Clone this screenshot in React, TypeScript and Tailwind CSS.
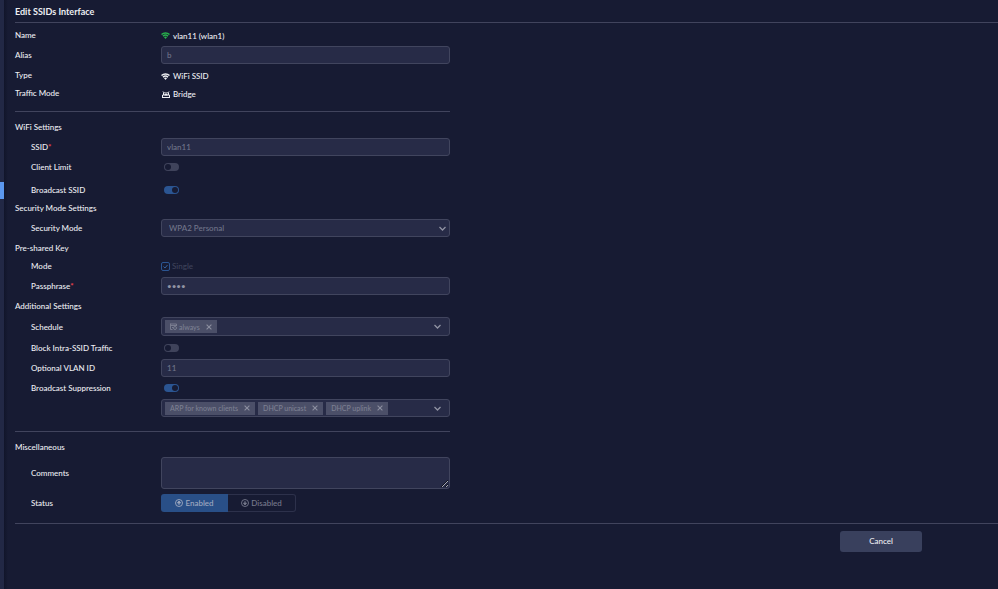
import type { ReactNode } from 'react';
import clsx from 'clsx';

const field =
  'block w-full rounded-[3px] border border-[#41455e] bg-[#272b47] text-[8px] leading-3 font-medium text-[#71758a] outline-none';

function Row({
  label,
  htmlFor,
  required,
  indent = true,
  className,
  children,
}: {
  label?: string;
  htmlFor?: string;
  required?: boolean;
  indent?: boolean;
  className: string;
  children: ReactNode;
}) {
  return (
    <div className={clsx('flex items-center', className)}>
      <div className={clsx('w-[146px] shrink-0', indent && 'pl-4')}>
        {label && (
          <label htmlFor={htmlFor}>
            {label}
            {required && <span className="font-bold text-[#f0444f]">*</span>}
          </label>
        )}
      </div>
      <div className="min-w-0 flex-1">{children}</div>
    </div>
  );
}

function Wifi({ className }: { className?: string }) {
  return (
    <svg viewBox="0 0 18 14" className={clsx('h-[7px] w-[9px]', className)} fill="none" stroke="currentColor" strokeWidth="3">
      <path d="M1 5C5.500.9 12.500.9 17 5" />
      <path d="M4 8.300c3-2.600 7-2.600 10 0" />
      <path d="M5.800 10c1.900-1.500 4.500-1.500 6.400 0L9 14z" fill="currentColor" stroke="none" />
    </svg>
  );
}

function Bridge() {
  return (
    <svg viewBox="0 0 16 14" className="h-[7px] w-2" fill="none" stroke="currentColor" strokeWidth="2">
      <path d="M1 14V8h14v6M1 13h14" />
      <path d="M3 8V3M13 8V3M2 1l3 3h6l3-3" />
      <path d="M5 6h6v3H5z" fill="currentColor" stroke="none" />
    </svg>
  );
}

function Chevron() {
  return (
    <svg viewBox="0 0 14 10" className="h-[5px] w-[7px] shrink-0" fill="none" stroke="#9093a3" strokeWidth="2.6">
      <path d="M1 2l6 6 6-6" />
    </svg>
  );
}

function Cross() {
  return (
    <svg viewBox="0 0 10 10" className="size-[6px]" fill="none" stroke="#8c8fa0" strokeWidth="1.800">
      <path d="M1 1l8 8M9 1L1 9" />
    </svg>
  );
}

function CalendarIcon() {
  return (
    <svg viewBox="0 0 14 14" className="size-[7px]" fill="none" stroke="currentColor" strokeWidth="1.800">
      <path d="M1 2h12v4M1 5h12M1 1v12h4M4 9h2" />
      <circle cx="10" cy="10" r="3" />
    </svg>
  );
}

function StatusIcon({ down }: { down?: boolean }) {
  return (
    <svg viewBox="0 0 16 16" className="size-2" fill="none" stroke="currentColor" strokeWidth="1.800">
      <circle cx="8" cy="8" r="7" />
      {down ? (
        <path d="M8 4v6M5 8h6l-3 4z" fill="currentColor" />
      ) : (
        <path d="M8 12V6M5 8h6L8 4z" fill="currentColor" />
      )}
    </svg>
  );
}

function Toggle({ id, on }: { id: string; on?: boolean }) {
  return (
    <span className="ml-[3px] flex">
      <input id={id} type="checkbox" role="switch" defaultChecked={on} disabled className="peer sr-only" />
      <span
        className={clsx(
          'flex h-2 w-[15px] items-center rounded-full px-px',
          on ? 'justify-end bg-[#2b5592]' : 'justify-start bg-[#3f435b]',
        )}
      >
        <span className="size-[6px] rounded-full bg-[#171b33]" />
      </span>
    </span>
  );
}

function Tag({ text, icon }: { text: string; icon?: ReactNode }) {
  return (
    <span className="flex h-[13px] items-center bg-[#4b4f68] pr-[5px] pl-[5px] text-[7px] leading-3 text-[#7d8093]">
      {icon && <span className="mr-0.5">{icon}</span>}
      {text}
      <button type="button" disabled aria-label={`Remove ${text}`} className="ml-1.5">
        <Cross />
      </button>
    </span>
  );
}

function TagBox({ label, className, children }: { label: string; className: string; children: ReactNode }) {
  return (
    <div role="group" aria-label={label} className={clsx(field, className, 'flex! items-center gap-[3px] pr-2 pl-[3px]')}>
      {children}
      <span className="ml-auto">
        <Chevron />
      </span>
    </div>
  );
}

const divider = 'border-t border-[#41445d]';

export default function App() {
  return (
    <div className="flex min-h-screen bg-[#171b33] font-['Lato',sans-serif] text-[8px] leading-3 font-medium text-[#eeeff3]">
      <aside className="w-1 shrink-0 bg-[#222845] pt-[182px]">
        <div className="h-[17px] bg-[#5b97ee]" />
      </aside>
      <div className="w-1 shrink-0 bg-linear-to-r from-[#11152a] to-[#171b33]" />
      <main className="min-w-0 flex-1 pl-[7px]">
        <h1 className="flex h-[23px] items-center border-b border-[#41445d] pt-px text-[9px] font-bold">
          Edit SSIDs Interface
        </h1>

        <form>
          <div className="w-full max-w-[435px]">
            <Row label="Name" indent={false} className="h-[23px]">
              <span className="flex items-center gap-[3px] pt-0.5">
                <Wifi className="text-[#28b14c]" />
                vlan11 (wlan1)
              </span>
            </Row>
            <Row label="Alias" htmlFor="alias" indent={false} className="h-[18px]">
              <input id="alias" disabled defaultValue="b" className={clsx(field, 'h-[18px] px-[5px] pb-px')} />
            </Row>
            <Row label="Type" indent={false} className="h-[22px]">
              <span className="flex items-center gap-[3px] pt-0.5">
                <Wifi />
                WiFi SSID
              </span>
            </Row>
            <Row label="Traffic Mode" indent={false} className="h-[14px]">
              <span className="flex items-center gap-[3px] pt-0.5 pl-px">
                <Bridge />
                Bridge
              </span>
            </Row>

            <div className={clsx(divider, 'mt-[11px]')} />

            <h2 className="flex h-[26px] items-center pt-1">WiFi Settings</h2>
            <Row label="SSID" htmlFor="ssid" required className="h-[18px]">
              <input id="ssid" disabled defaultValue="vlan11" className={clsx(field, 'h-[18px] px-[5px] pb-px')} />
            </Row>
            <Row label="Client Limit" htmlFor="limit" className="h-[21px]">
              <Toggle id="limit" />
            </Row>
            <Row label="Broadcast SSID" htmlFor="broadcast" className="h-[25px]">
              <Toggle id="broadcast" on />
            </Row>

            <h2 className="mb-[5px] h-3">Security Mode Settings</h2>
            <Row label="Security Mode" htmlFor="security" className="h-[18px]">
              <div className="relative">
                <select id="security" disabled className={clsx(field, 'h-[18px] appearance-none px-[7px] opacity-100')}>
                  <option>WPA2 Personal</option>
                </select>
                <span className="pointer-events-none absolute inset-y-0 right-1 flex items-center">
                  <Chevron />
                </span>
              </div>
            </Row>

            <h2 className="flex h-[22px] items-center">Pre-shared Key</h2>
            <Row label="Mode" className="mb-1 h-[14px]">
              <label className="flex items-center gap-0.5 text-[#3f435b]">
                <span className="relative flex size-[9px] items-center justify-center">
                  <input
                    type="checkbox"
                    defaultChecked
                    disabled
                    className="size-[9px] appearance-none rounded-[2px] border border-[#2b5592]"
                  />
                  <svg
                    viewBox="0 0 10 10"
                    className="pointer-events-none absolute size-[5px]"
                    fill="none"
                    stroke="#34639f"
                    strokeWidth="2"
                  >
                    <path d="M1 5l3 3 5-6" />
                  </svg>
                </span>
                Single
              </label>
            </Row>
            <Row label="Passphrase" htmlFor="pass" required className="h-[18px]">
              <input
                id="pass"
                type="password"
                disabled
                defaultValue="abcd"
                className={clsx(field, 'h-[18px] px-[5px] text-[#9093a3]!')}
              />
            </Row>

            <h2 className="flex h-[22px] items-center">Additional Settings</h2>
            <Row label="Schedule" className="h-[19px]">
              <TagBox label="Schedule" className="h-[19px]">
                <Tag text="always" icon={<CalendarIcon />} />
              </TagBox>
            </Row>
            <Row label="Block Intra-SSID Traffic" htmlFor="intra" className="h-[23px]">
              <Toggle id="intra" />
            </Row>
            <Row label="Optional VLAN ID" htmlFor="vlan" className="h-[18px]">
              <input id="vlan" disabled defaultValue="11" className={clsx(field, 'h-[18px] px-[5px]')} />
            </Row>
            <Row label="Broadcast Suppression" htmlFor="suppress" className="h-[22px]">
              <Toggle id="suppress" on />
            </Row>
            <Row className="h-[18px]">
              <TagBox label="Broadcast Suppression" className="h-[18px]">
                <Tag text="ARP for known clients" />
                <Tag text="DHCP unicast" />
                <Tag text="DHCP uplink" />
              </TagBox>
            </Row>

            <div className={clsx(divider, 'mt-[14px]')} />

            <h2 className="flex h-[25px] items-center pt-1">Miscellaneous</h2>
            <Row label="Comments" htmlFor="comments" className="h-8">
              <textarea id="comments" disabled className={clsx(field, 'h-8 resize px-1')} />
            </Row>
            <Row label="Status" className="mt-[5px] h-[18px]">
              <div role="group" aria-label="Status" className="flex h-[18px] w-[135px]">
                <button
                  type="button"
                  disabled
                  className="flex flex-1 items-center justify-center gap-0.5 rounded-l-[3px] bg-[#294f87] text-[#a0aac1]"
                >
                  <StatusIcon />
                  Enabled
                </button>
                <button
                  type="button"
                  disabled
                  className="flex flex-1 items-center justify-center gap-0.5 rounded-r-[3px] border border-l-0 border-[#2d314b] text-[#777a8c]"
                >
                  <StatusIcon down />
                  Disabled
                </button>
              </div>
            </Row>
          </div>

          <div className={clsx(divider, 'mt-[11px] flex justify-end pt-[7px] pr-[76px]')}>
            <button type="button" className="h-[21px] w-[82px] rounded-[3px] bg-[#39405d] pb-0.5">
              Cancel
            </button>
          </div>
        </form>
      </main>
    </div>
  );
}
